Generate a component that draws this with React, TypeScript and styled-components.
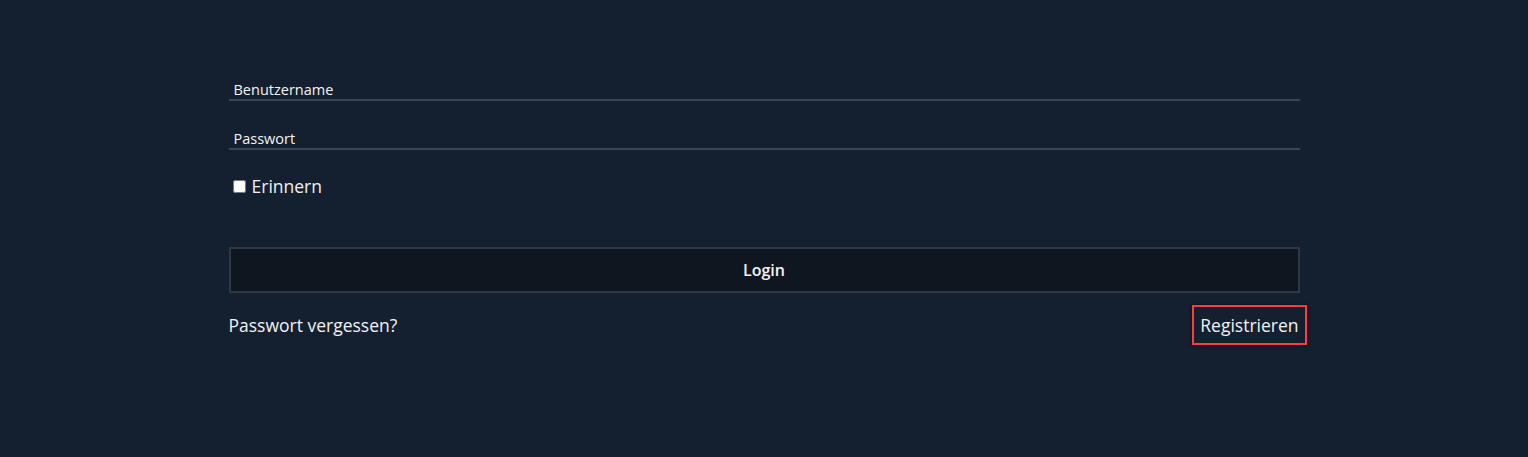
import React from "react";
import styled, { createGlobalStyle } from "styled-components";

const GlobalStyle = createGlobalStyle`
  html, body {
    margin: 0;
    padding: 0;
    background: #141f2f;
  }
  body {
    font-family: "Open Sans", "Noto Sans", sans-serif;
    color: #f0f0f0;
  }
`;

const Page = styled.div`
  width: 100%;
  height: 457px;
  background: #141f2f;
  display: flex;
  justify-content: center;
`;

const Form = styled.form`
  width: 1071px;
  padding-top: 79px;
  display: flex;
  flex-direction: column;
`;

const Field = styled.label`
  display: block;
  height: 20px;
  padding: 0 5px;
  border-bottom: 2px solid #3a4454;
  margin-bottom: 27px;
  font-size: 14.5px;
  line-height: 21px;
  color: #f4f4f4;
  cursor: text;
`;

const CheckRow = styled.label`
  display: flex;
  align-items: center;
  gap: 6px;
  padding-left: 1px;
  height: 18px;
  font-size: 17.5px;
  color: #f2f2f2;
`;

const Box = styled.input`
  width: 13px;
  height: 13px;
  margin: 0 0 0 3px;
`;

const LoginButton = styled.button`
  margin-top: 52px;
  height: 46px;
  width: 1071px;
  background: #10161f;
  border: 2px solid #2d3844;
  color: #f4f4f4;
  font-family: "Open Sans", "Noto Sans", sans-serif;
  font-size: 16px;
  font-weight: 600;
  cursor: pointer;
`;

const Links = styled.div`
  display: flex;
  justify-content: space-between;
  align-items: center;
  margin-top: 12px;
`;

const Link = styled.a<{ $boxed?: boolean }>`
  font-size: 17.5px;
  color: #f2f2f2;
  text-decoration: none;
  line-height: 24px;
  padding: ${(p) => (p.$boxed ? "6px 6px 6px 6px" : "0")};
  border: ${(p) => (p.$boxed ? "2px solid #ff3d3d" : "none")};
  margin-right: ${(p) => (p.$boxed ? "-7px" : "0")};
  box-shadow: ${(p) => (p.$boxed ? "0 0 3px rgba(0,0,0,0.6)" : "none")};
`;

export default function App() {
  return (
    <Page>
      <GlobalStyle />
      <Form onSubmit={(e) => e.preventDefault()}>
        <Field>Benutzername</Field>
        <Field>Passwort</Field>
        <CheckRow>
          <Box type="checkbox" />
          Erinnern
        </CheckRow>
        <LoginButton type="submit">Login</LoginButton>
        <Links>
          <Link href="#">Passwort vergessen?</Link>
          <Link href="#" $boxed>
            Registrieren
          </Link>
        </Links>
      </Form>
    </Page>
  );
}
